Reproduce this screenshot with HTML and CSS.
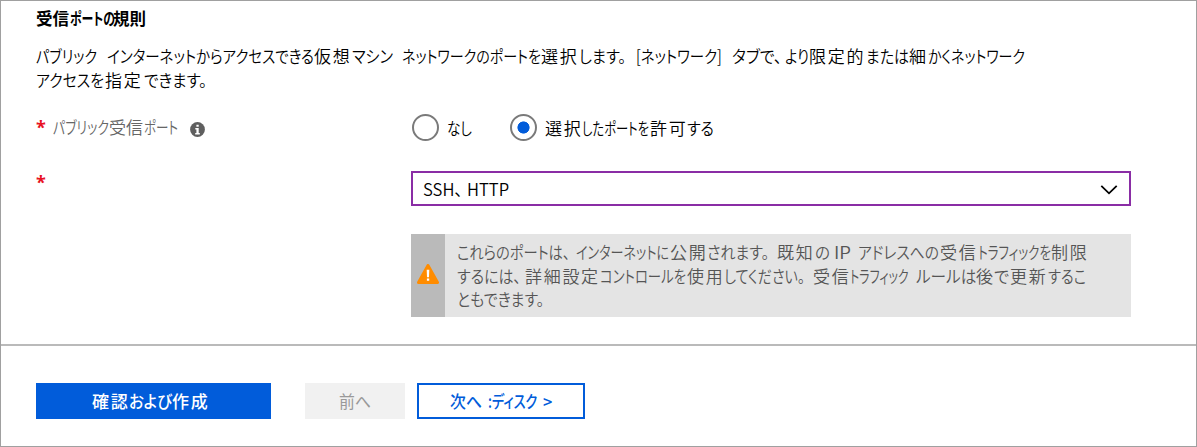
FILE: index.html
```html
<!DOCTYPE html>
<html lang="ja">
<head>
<meta charset="utf-8">
<title>受信ポートの規則</title>
<link rel="stylesheet" href="styles.css">
</head>
<body>
<main class="panel">
  <section class="rules">
    <h1 class="line title"><span class="kanji snug" style="--w:34">受信</span><span class="run" style="--w:43;--n:59.5"><b>ポートの</b></span><span class="kanji snug" style="--w:33">規則</span></h1>
    <div class="intro">
      <p class="line"><span class="run" style="--w:61;--n:73.5;--g:10"><b>パブリック</b></span><span class="run" style="--w:207;--n:242.8"><b>インターネットからアクセスできる</b></span><span class="kanji" style="--w:38">仮想</span><span class="run" style="--w:41;--n:46.1;--g:9"><b>マシン</b></span><span class="run" style="--w:139;--n:168.2"><b>ネットワークのポートを</b></span><span class="kanji" style="--w:38">選択</span><span class="run" style="--w:47;--n:52.2;--g:10"><b>します。</b></span><span class="run" style="--w:86;--n:101.4;--g:10"><b>[ネットワーク]</b></span><span class="run" style="--w:50;--n:53.3;--g:3"><b>タブで、</b></span><span class="run" style="--w:24;--n:28.7"><b>より</b></span><span class="kanji" style="--w:57">限定的</span><span class="run" style="--w:43;--n:48.9"><b>または</b></span><span class="kanji" style="--w:19">細</span><span class="run" style="--w:97;--n:118"><b>かくネットワーク</b></span></p>
      <p class="line"><span class="run" style="--w:68;--n:77.4;--g:1"><b>アクセスを</b></span><span class="kanji" style="--w:39">指定</span><span class="run" style="--w:63;--n:68.4"><b>できます。</b></span></p>
    </div>

    <div class="form">
      <div class="label">
        <span class="star">*</span>
        <span class="line"><span class="run" style="--w:56;--n:73.5"><b>パブリック</b></span><span class="kanji snug" style="--w:35">受信</span><span class="run" style="--w:34;--n:46.2"><b>ポート</b></span></span>
        <svg class="info" viewBox="0 0 15 15"><circle cx="7.5" cy="7.5" r="7.4" fill="#5f5f5f"/><path d="M6.4 2.7h2.3v2H6.4zM5.3 6h3.4v5h1.1v1.4H5.2V11h1.2V7.4H5.3z" fill="#fff"/></svg>
      </div>
      <div class="radios">
        <span class="radio"></span>
        <span class="line none"><span class="run" style="--w:25;--n:31.1"><b>なし</b></span></span>
        <span class="radio on"></span>
        <span class="line"><span class="kanji" style="--w:37">選択</span><span class="run" style="--w:67;--n:92.5;--g:1"><b>したポートを</b></span><span class="kanji" style="--w:37">許可</span><span class="run" style="--w:27;--n:30.6"><b>する</b></span></span>
      </div>

      <div class="label second"><span class="star">*</span></div>
      <div class="select">
        <span class="line"><span class="run" style="--w:44;--n:45"><b>SSH、</b></span><span class="run" style="--w:42;--n:43"><b>HTTP</b></span></span>
        <svg class="chevron" viewBox="0 0 18 12"><path d="M1.3 1.8 9 9.3l7.7-7.5" fill="none" stroke="#000" stroke-width="1.8"/></svg>
      </div>

      <div class="notice">
        <div class="notice-icon"><svg viewBox="0 0 22 20"><path d="M11 1.5 20.5 18.5H1.5z" fill="#ff8c00" stroke="#ff8c00" stroke-width="3" stroke-linejoin="round"/><path d="M9.7 5.8h2.6l-.3 7.4h-2zM9.9 14.6h2.3v2.2H9.9z" fill="#fff"/></svg></div>
        <div class="notice-text">
          <p class="line"><span class="run" style="--w:113;--n:134.6;--g:6"><b>これらのポートは、</b></span><span class="run" style="--w:93;--n:120.8;--g:1"><b>インターネットに</b></span><span class="kanji" style="--w:37">公開</span><span class="run" style="--w:62;--n:70;--g:8"><b>されます。</b></span><span class="kanji" style="--w:38">既知</span><span class="run" style="--w:14;--n:15.3;--g:5"><b>の</b></span><span class="run" style="--w:17;--n:15.5;--g:7"><b>IP</b></span><span class="run" style="--w:82;--n:94.5"><b>アドレスへの</b></span><span class="kanji" style="--w:38">受信</span><span class="run" style="--w:73;--n:99.1"><b>トラフィックを</b></span><span class="kanji" style="--w:38">制限</span></p>
          <p class="line"><span class="run" style="--w:64;--n:72.5;--g:4"><b>するには、</b></span><span class="kanji" style="--w:75">詳細設定</span><span class="run" style="--w:86;--n:109.3;--g:1"><b>コントロールを</b></span><span class="kanji" style="--w:37">使用</span><span class="run" style="--w:81;--n:97.6;--g:8"><b>してください。</b></span><span class="kanji" style="--w:37">受信</span><span class="run" style="--w:59;--n:83.8;--g:7"><b>トラフィック</b></span><span class="run" style="--w:60;--n:65.2"><b>ルールは</b></span><span class="kanji" style="--w:18">後</span><span class="run" style="--w:15;--n:15.7;--g:1"><b>で</b></span><span class="kanji" style="--w:38">更新</span><span class="run" style="--w:38;--n:45.3"><b>するこ</b></span></p>
          <p class="line"><span class="run" style="--w:87;--n:98.8"><b>ともできます。</b></span></p>
        </div>
      </div>
    </div>
  </section>

  <footer class="actions">
    <button class="btn primary"><span class="line"><span class="kanji" style="--w:37">確認</span><span class="run" style="--w:43;--n:47.6"><b>および</b></span><span class="kanji" style="--w:36">作成</span></span></button>
    <button class="btn prev" disabled><span class="line"><span class="run" style="--w:32;--n:34.3"><b>前へ</b></span></span></button>
    <button class="btn next"><span class="line"><span class="run" style="--w:32;--n:34.3;--g:6"><b>次へ</b></span><span class="run" style="--w:49;--n:63;--g:6"><b>:ディスク</b></span><span class="run" style="--w:9;--n:9.4"><b>&gt;</b></span></span></button>
  </footer>
</main>
</body>
</html>
```
FILE: styles.css
```css
* { box-sizing: border-box; margin: 0; padding: 0; }

body {
  background: #fff;
  color: #000;
  font: 350 17px/24px "Noto Sans CJK JP", sans-serif;
}

.panel {
  width: 1197px;
  height: 447px;
  border: 1px solid #a0a0a0;
  overflow: hidden;
}

/* Runs of text: kanji are set loose, kana are condensed to --w from natural width --n */
.line {
  display: flex;
  height: 24px;
  white-space: pre;
  font-feature-settings: "palt";
}
.run {
  flex: none;
  width: calc(var(--w) * 1px);
  margin-right: calc(var(--g, 0) * 1px);
}
.run b {
  display: inline-block;
  font-weight: inherit;
  transform: scaleX(calc(var(--w) / var(--n)));
  transform-origin: 0 50%;
}
.kanji {
  flex: none;
  width: calc(var(--w) * 1px);
  letter-spacing: 1.7px;
}
.kanji.snug { letter-spacing: 0; }

.rules {
  height: 343px;
  padding: 5px 65px 0 35px;
}
.title {
  font-size: 16.5px;
  font-weight: 700;
}
.intro { margin-top: 14px; }

.form {
  display: grid;
  grid-template-columns: 375px 720px;
  grid-template-rows: 28px 36px 83px;
  row-gap: 28px;
  margin-top: 22px;
}
.label {
  display: flex;
  align-items: center;
  padding-bottom: 2px;
  color: #666;
}
.star {
  width: 17px;
  height: 24px;
  color: #e81123;
  font: 700 18px/24px "Open Sans", sans-serif;
}
.info {
  width: 15px;
  height: 15px;
  margin: 4px 0 0 12px;
}
.label.second { align-items: flex-start; }

.radios {
  display: flex;
  align-items: center;
  padding-bottom: 1px;
}
.radio {
  width: 27px;
  height: 27px;
  margin: 0 8px 0 1px;
  border: 2px solid #7a7a7a;
  border-radius: 50%;
}
.radio.on {
  background: radial-gradient(circle, #015cda 5.7px, transparent 6.4px);
}
.none { margin-right: 37px; }

.select {
  display: flex;
  align-items: center;
  justify-content: space-between;
  margin-top: 1px;
  height: 35px;
  padding: 0 11px 0 10px;
  border: 2px solid #8a2da5;
}
.chevron {
  width: 18px;
  height: 12px;
  margin-top: 2px;
}

.notice {
  grid-column: 2;
  display: flex;
  background: #e4e4e4;
  color: #555;
}
.notice-icon {
  display: flex;
  align-items: center;
  justify-content: center;
  width: 34px;
  background: #bababa;
}
.notice-icon svg { width: 22px; height: 20px; margin-top: -3px; }
.notice-text { padding: 6px 0 0 12px; }
.notice-text .line { height: 23.5px; }

.actions {
  display: flex;
  height: 102px;
  padding: 37px 35px 0;
  border-top: 2px solid #bababa;
}
.btn {
  display: flex;
  align-items: center;
  justify-content: center;
  height: 36px;
  border: 0;
  font: 500 17px/24px "Noto Sans CJK JP", sans-serif;
}
.primary {
  width: 235px;
  padding-right: 7px;
  background: #015cda;
  color: #fff;
}
.prev {
  width: 100px;
  margin: 0 12px 0 34px;
  background: #f1f1f1;
  color: #999;
  font-weight: 400;
}
.next {
  width: 168px;
  border: 2px solid #015cda;
  background: #fff;
  color: #015cda;
}
```
